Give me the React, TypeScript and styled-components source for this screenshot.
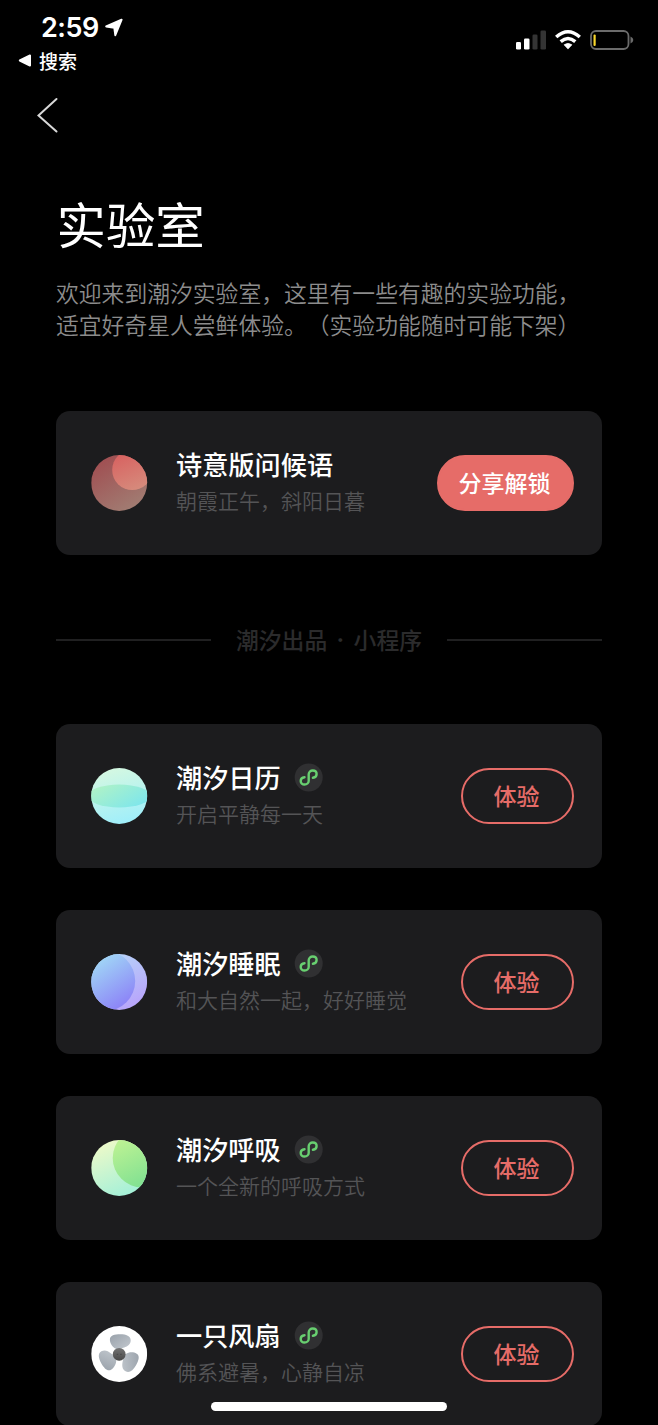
import React from "react";
import styled, { createGlobalStyle } from "styled-components";

const GlobalStyle = createGlobalStyle`
  *, *::before, *::after { box-sizing: border-box; }
  html, body { margin: 0; background: #000; }
  body {
    font-family: "Noto Sans CJK SC", "Noto Sans", sans-serif;
    color: #fff;
    text-spacing-trim: space-all;
  }
`;

const Screen = styled.div`
  position: relative;
  width: 658px;
  height: 1425px;
  overflow: hidden;
  background: #000;
`;

const StatusBar = styled.header`
  display: flex;
  justify-content: space-between;
  height: 82px;
  padding: 12px 24px 0 18px;
`;

const StatusLeft = styled.div`
  display: flex;
  flex-direction: column;
`;

const Clock = styled.div`
  display: flex;
  align-items: center;
  gap: 6px;
  height: 32px;
  padding-left: 23px;
  font-family: Inter, sans-serif;
  font-size: 27px;
  font-weight: 600;
  letter-spacing: -0.5px;
  line-height: 32px;
`;

const ReturnLink = styled.div`
  display: flex;
  align-items: center;
  gap: 8px;
  height: 32px;
  font-size: 19px;
  font-weight: 500;
  line-height: 31px;
`;

const StatusIcons = styled.div`
  display: flex;
  align-items: center;
  height: 56px;
`;

const NavBar = styled.nav`
  display: flex;
  align-items: center;
  height: 66px;
  padding-left: 36px;
`;

const BackButton = styled.button`
  display: flex;
  padding: 0;
  border: 0;
  background: none;
`;

const Content = styled.main`
  display: flex;
  flex-direction: column;
  padding: 39px 56px 0;
`;

const Title = styled.h1`
  margin: 0;
  padding-left: 0.5px;
  font-size: 49.4px;
  font-weight: 400;
  line-height: 72px;
`;

const Intro = styled.p`
  height: 64px;
  margin: 18px 0 70px;
  color: #8c8c8c;
  font-size: 22.8px;
  font-weight: 350;
  line-height: 31.5px;
  white-space: nowrap;
`;

const CardList = styled.section`
  display: flex;
  flex-direction: column;
  gap: 42px;
`;

const Card = styled.article`
  display: flex;
  align-items: center;
  height: 144px;
  padding: 0 28px 0 35px;
  border-radius: 14px;
  background: #1c1c1e;
`;

const CardText = styled.div`
  flex: 1;
  margin-left: 28px;
  padding-bottom: 3px;
`;

const CardHeading = styled.div`
  display: flex;
  align-items: center;
  gap: 13px;
  height: 36px;
`;

const CardTitle = styled.h2`
  margin: 0;
  font-size: 26.2px;
  font-weight: 500;
  line-height: 36px;
`;

const CardSubtitle = styled.p`
  margin: 0;
  color: #545456;
  font-size: 21px;
  font-weight: 350;
  line-height: 36px;
  white-space: nowrap;
`;

const PillButton = styled.button<{ $filled?: boolean }>`
  width: ${(p) => (p.$filled ? 137 : 113)}px;
  height: 56px;
  padding: 0 2px 2px 0;
  border: 2px solid #e66c68;
  border-radius: 28px;
  background: ${(p) => (p.$filled ? "#e66c68" : "transparent")};
  color: ${(p) => (p.$filled ? "#fff" : "#e66c68")};
  font-family: inherit;
  font-size: 23px;
  font-weight: 500;
  line-height: 32px;
`;

const Divider = styled.div`
  display: flex;
  align-items: center;
  gap: 25px;
  height: 169px;
  color: #2b2b2c;
  font-size: 22.8px;
  font-weight: 500;
  white-space: nowrap;

  &::before,
  &::after {
    content: "";
    flex: 1;
    height: 2px;
    background: #202021;
  }
`;

const DividerLabel = styled.span`
  display: flex;
  justify-content: space-between;
  width: 186px;
  line-height: 32px;
`;

const Dot = styled.span`
  font-family: Inter, sans-serif;
  font-weight: 700;
`;

const HomeIndicator = styled.div`
  position: absolute;
  bottom: 14px;
  left: 211px;
  width: 236px;
  height: 9px;
  border-radius: 5px;
  background: #fff;
`;

type OrbKind = "poem" | "calendar" | "sleep" | "breath" | "fan";

const orbArt: Record<OrbKind, React.ReactNode> = {
  poem: (
    <>
      <linearGradient id="poemBase" x1="0.15" y1="0.1" x2="0.7" y2="1">
        <stop offset="0" stopColor="#a04f52" />
        <stop offset="1" stopColor="#a17d73" />
      </linearGradient>
      <linearGradient id="poemSun" x1="0.3" y1="0" x2="0.7" y2="1">
        <stop offset="0" stopColor="#d8605f" />
        <stop offset="1" stopColor="#d68c7d" />
      </linearGradient>
      <rect width="56" height="56" fill="url(#poemBase)" />
      <circle cx="41" cy="15" r="20" fill="url(#poemSun)" />
    </>
  ),
  calendar: (
    <>
      <linearGradient id="calBase" x1="0.35" y1="0" x2="0.65" y2="1">
        <stop offset="0" stopColor="#d5f8e1" />
        <stop offset="1" stopColor="#9eeefb" />
      </linearGradient>
      <linearGradient id="calBand" x1="0" y1="0.2" x2="1" y2="0.8">
        <stop offset="0" stopColor="#b1f3c5" />
        <stop offset="1" stopColor="#7be5ee" />
      </linearGradient>
      <rect width="56" height="56" fill="url(#calBase)" />
      <ellipse cx="28" cy="28" rx="31" ry="11.5" fill="url(#calBand)" />
    </>
  ),
  sleep: (
    <>
      <linearGradient id="sleepBase" x1="0.2" y1="0" x2="0.75" y2="1">
        <stop offset="0" stopColor="#b6d8f8" />
        <stop offset="1" stopColor="#b8a2fb" />
      </linearGradient>
      <linearGradient id="sleepMoon" x1="0.3" y1="0.1" x2="0.85" y2="0.9">
        <stop offset="0" stopColor="#a2def6" />
        <stop offset="1" stopColor="#8c82f7" />
      </linearGradient>
      <rect width="56" height="56" fill="url(#sleepBase)" />
      <circle cx="14" cy="27" r="30" fill="url(#sleepMoon)" />
    </>
  ),
  breath: (
    <>
      <linearGradient id="breathBase" x1="0.2" y1="0.1" x2="0.6" y2="1">
        <stop offset="0" stopColor="#eaf9c9" />
        <stop offset="1" stopColor="#a4f0d8" />
      </linearGradient>
      <linearGradient id="breathLeaf" x1="0.2" y1="0.1" x2="0.6" y2="0.9">
        <stop offset="0" stopColor="#c0f393" />
        <stop offset="1" stopColor="#82e192" />
      </linearGradient>
      <rect width="56" height="56" fill="url(#breathBase)" />
      <circle cx="51" cy="18" r="29.5" fill="url(#breathLeaf)" />
    </>
  ),
  fan: (
    <>
      <linearGradient id="fanBlade" x1="0" y1="0" x2="1" y2="1">
        <stop offset="0" stopColor="#99a1aa" />
        <stop offset="1" stopColor="#c3c9cf" />
      </linearGradient>
      <linearGradient id="fanHub" x1="0" y1="0" x2="0" y2="1">
        <stop offset="0" stopColor="#737373" />
        <stop offset="1" stopColor="#494949" />
      </linearGradient>
      <rect width="56" height="56" fill="#fff" />
      {[0, 120, 240].map((angle) => (
        <path
          key={angle}
          d="M18.700 13.500C18.700 9.500 23.500 8.300 29 8.300C35 8.300 39.500 10 39.500 14.300C39.500 18.300 36.500 20.300 33 21.500C30 22.600 27 24 24.500 22.800C21 21 18.700 17.200 18.700 13.500Z"
          fill="url(#fanBlade)"
          transform={`rotate(${angle} 28 28.300)`}
        />
      ))}
      <circle cx="28" cy="28.300" r="6.400" fill="url(#fanHub)" />
      <path d="M25.500 28.300h1.500M29 28.300h1.500" stroke="#454545" />
    </>
  ),
};

const Orb = ({ kind }: { kind: OrbKind }) => (
  <svg width="57" height="57" viewBox="0 0 57 57">
    <clipPath id={`clip-${kind}`}>
      <circle cx="28" cy="28" r="28" />
    </clipPath>
    <g clipPath={`url(#clip-${kind})`} transform="translate(.2 0)">
      {orbArt[kind]}
    </g>
  </svg>
);

const MiniProgramBadge = () => (
  <svg width="29" height="30" viewBox="0 0 29 30">
    <g transform="translate(.2 1)">
      <circle cx="14.500" cy="14.500" r="14" fill="#303032" />
      <path
        d="M10.300 14.200C7.700 14.500 6.500 16.100 6.500 18C6.500 20.100 8.200 21.500 10.300 21.500C12.700 21.500 14.500 19.900 14.500 17.700V11.300C14.500 9.100 16.300 7.500 18.600 7.500C20.800 7.500 22.400 8.900 22.400 11C22.400 12.900 21.200 14.500 18.700 14.800"
        fill="none"
        stroke="#68cf70"
        strokeWidth="2.400"
        strokeLinecap="round"
      />
    </g>
  </svg>
);

const programs: { kind: OrbKind; title: string; subtitle: string }[] = [
  { kind: "calendar", title: "潮汐日历", subtitle: "开启平静每一天" },
  { kind: "sleep", title: "潮汐睡眠", subtitle: "和大自然一起，好好睡觉" },
  { kind: "breath", title: "潮汐呼吸", subtitle: "一个全新的呼吸方式" },
  { kind: "fan", title: "一只风扇", subtitle: "佛系避暑，心静自凉" },
];

export default function App() {
  return (
    <Screen>
      <GlobalStyle />
      <StatusBar>
        <StatusLeft>
          <Clock>
            2:59
            <svg width="19" height="20" viewBox="0 0 19 20">
              <path
                d="M1.200 8.500L16.600 1.700L10.300 17.200L9.300 9.700Z"
                fill="#fff"
                stroke="#fff"
                strokeWidth="2"
                strokeLinejoin="round"
              />
            </svg>
          </Clock>
          <ReturnLink>
            <svg width="13" height="13" viewBox="0 0 13 13">
              <path
                d="M1.800 6.500L12 1.500V11.500Z"
                fill="#fff"
                stroke="#fff"
                strokeWidth="2"
                strokeLinejoin="round"
              />
            </svg>
            搜索
          </ReturnLink>
        </StatusLeft>
        <StatusIcons>
          <svg width="118" height="22" viewBox="0 0 118 22">
            <g fill="#fff">
              <rect x="0" y="13" width="5" height="7.500" rx="1.300" />
              <rect x="8" y="9.500" width="5.500" height="11" rx="1.300" />
              <rect x="16.500" y="5.500" width="5" height="15" rx="1.300" fill="#343434" />
              <rect x="24.500" y="1.500" width="5.500" height="19" rx="1.300" fill="#343434" />
            </g>
            <g fill="none" stroke="#fff" strokeWidth="3.500">
              <path d="M40.200 8Q52 -2.400 63.800 8" />
              <path d="M44.700 12.600Q52 6.400 59.300 12.600" />
            </g>
            <path
              d="M48 15.800Q52 12.800 56 15.800L52 20.100Z"
              fill="#fff"
              stroke="#fff"
              strokeWidth=".6"
              strokeLinejoin="round"
            />
            <rect x="75" y="2" width="37.500" height="18" rx="5" fill="none" stroke="#6b6b6b" strokeWidth="1.800" />
            <rect x="77.500" y="5.500" width="2.200" height="11.500" rx="1" fill="#f8d62c" />
            <path d="M114.500 7.500Q117.300 8.500 117.300 11Q117.300 13.500 114.500 14.500Z" fill="#6b6b6b" />
          </svg>
        </StatusIcons>
      </StatusBar>
      <NavBar>
        <BackButton aria-label="返回">
          <svg width="24" height="36" viewBox="0 0 24 36">
            <path
              d="M20.500 2L2.500 18.500L20.500 34.500"
              fill="none"
              stroke="#d8d8d8"
              strokeWidth="2"
              strokeLinecap="round"
            />
          </svg>
        </BackButton>
      </NavBar>
      <Content>
        <Title>实验室</Title>
        <Intro>
          欢迎来到潮汐实验室，这里有一些有趣的实验功能，
          <br />
          适宜好奇星人尝鲜体验。（实验功能随时可能下架）
        </Intro>
        <Card>
          <Orb kind="poem" />
          <CardText>
            <CardHeading>
              <CardTitle>诗意版问候语</CardTitle>
            </CardHeading>
            <CardSubtitle>朝霞正午，斜阳日暮</CardSubtitle>
          </CardText>
          <PillButton $filled>分享解锁</PillButton>
        </Card>
        <Divider>
          <DividerLabel>
            潮汐出品<Dot>·</Dot>小程序
          </DividerLabel>
        </Divider>
        <CardList>
          {programs.map((item) => (
            <Card key={item.kind}>
              <Orb kind={item.kind} />
              <CardText>
                <CardHeading>
                  <CardTitle>{item.title}</CardTitle>
                  <MiniProgramBadge />
                </CardHeading>
                <CardSubtitle>{item.subtitle}</CardSubtitle>
              </CardText>
              <PillButton>体验</PillButton>
            </Card>
          ))}
        </CardList>
      </Content>
      <HomeIndicator />
    </Screen>
  );
}
